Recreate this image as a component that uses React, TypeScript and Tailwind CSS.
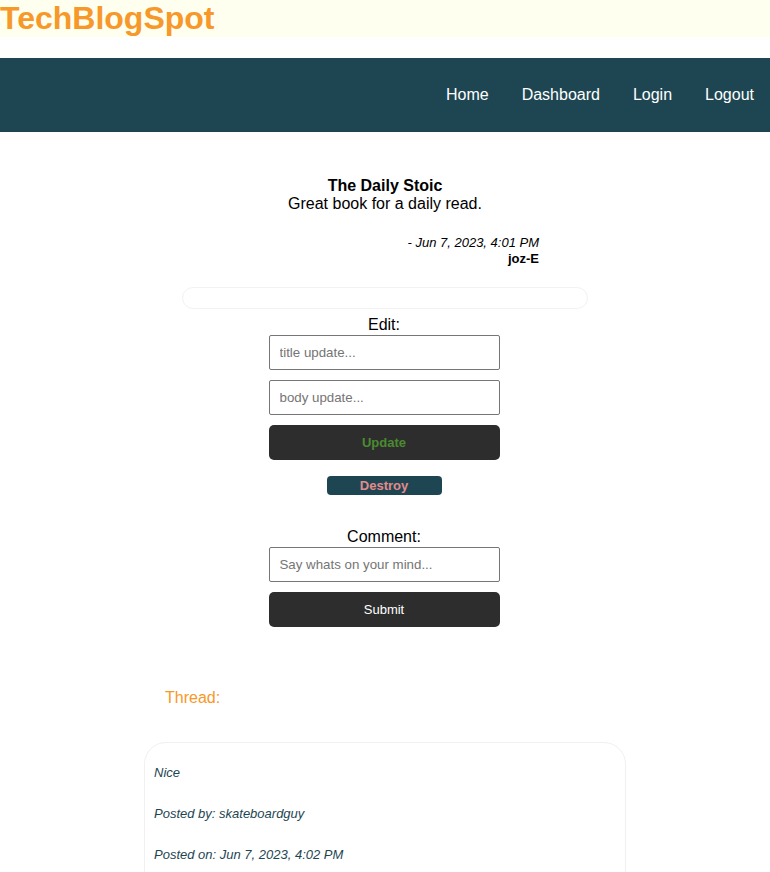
import React from "react";

export default function App() {
  const font = { fontFamily: '"Liberation Sans", Arial, Helvetica, sans-serif' };
  return (
    <div className="min-h-[872px] bg-white text-black relative overflow-hidden" style={font}>
      <header className="h-[37px] bg-[#fffff0]">
        <h1 className="text-[32px] leading-[37px] font-bold text-[#f7982a] m-0">TechBlogSpot</h1>
      </header>
      <nav className="mt-[21px] h-[74px] bg-[#1e4652] flex items-center justify-end pr-[16px] gap-[33px] text-white text-[16px]">
        <a>Home</a>
        <a>Dashboard</a>
        <a>Login</a>
        <a>Logout</a>
      </nav>

      <main className="w-[768px] flex flex-col items-center">
        <section className="mt-[45px] ml-[2px] w-[406px] flex flex-col">
          <div className="text-center text-[16px] leading-[18px]">
            <div className="font-bold">The Daily Stoic</div>
            <div>Great book for a daily read.</div>
          </div>
          <div className="mt-[22px] w-[357px] self-start text-right text-[13px] leading-[16px]">
            <div className="italic">- Jun 7, 2023, 4:01 PM</div>
            <div className="font-bold">joz-E</div>
          </div>
          <div className="mt-[20px] h-[22px] w-[406px] rounded-full border border-[#f2f2f2]" />
        </section>

        <section className="mt-[7px] w-[231px] flex flex-col items-center">
          <div className="text-[16px] leading-[18px]">Edit:</div>
          <input
            className="mt-[1px] w-[231px] h-[35px] border border-[#767676] rounded-[2px] px-[10px] text-[13.3px] placeholder:text-[#757575] outline-none"
            placeholder="title update..."
          />
          <input
            className="mt-[10px] w-[231px] h-[35px] border border-[#767676] rounded-[2px] px-[10px] text-[13.3px] placeholder:text-[#757575] outline-none"
            placeholder="body update..."
          />
          <button className="mt-[10px] w-[231px] h-[35px] bg-[#2d2d2d] rounded-[5px] text-[13px] font-bold text-[#4b8b30]">
            Update
          </button>
          <button className="mt-[16px] w-[115px] h-[19px] bg-[#1e4652] rounded-[4px] text-[13px] leading-[19px] font-bold text-[#e58a8a]">
            Destroy
          </button>
        </section>

        <section className="mt-[33px] w-[231px] flex flex-col items-center">
          <div className="text-[16px] leading-[18px]">Comment:</div>
          <input
            className="mt-[1px] w-[231px] h-[35px] border border-[#767676] rounded-[2px] px-[10px] text-[13.3px] placeholder:text-[#757575] outline-none"
            placeholder="Say whats on your mind..."
          />
          <button className="mt-[10px] w-[231px] h-[35px] bg-[#2d2d2d] rounded-[5px] text-[13px] text-white">
            Submit
          </button>
        </section>

        <section className="mt-[62px] ml-[2px] w-[482px] flex flex-col">
          <div className="ml-[21px] text-[16px] leading-[18px] text-[#f7982a]">Thread:</div>
          <div className="mt-[35px] h-[160px] rounded-[22px] border border-[#f0f0f0] px-[9px] pt-[22px] text-[13px] leading-[16px] italic text-[#1e4652] flex flex-col gap-[25px]">
            <div>Nice</div>
            <div>Posted by: skateboardguy</div>
            <div>Posted on: Jun 7, 2023, 4:02 PM</div>
          </div>
        </section>
      </main>
      <div className="absolute left-0 right-0 bottom-0 h-[8px] bg-gradient-to-b from-transparent to-[#f3f3f3]" />
    </div>
  );
}
